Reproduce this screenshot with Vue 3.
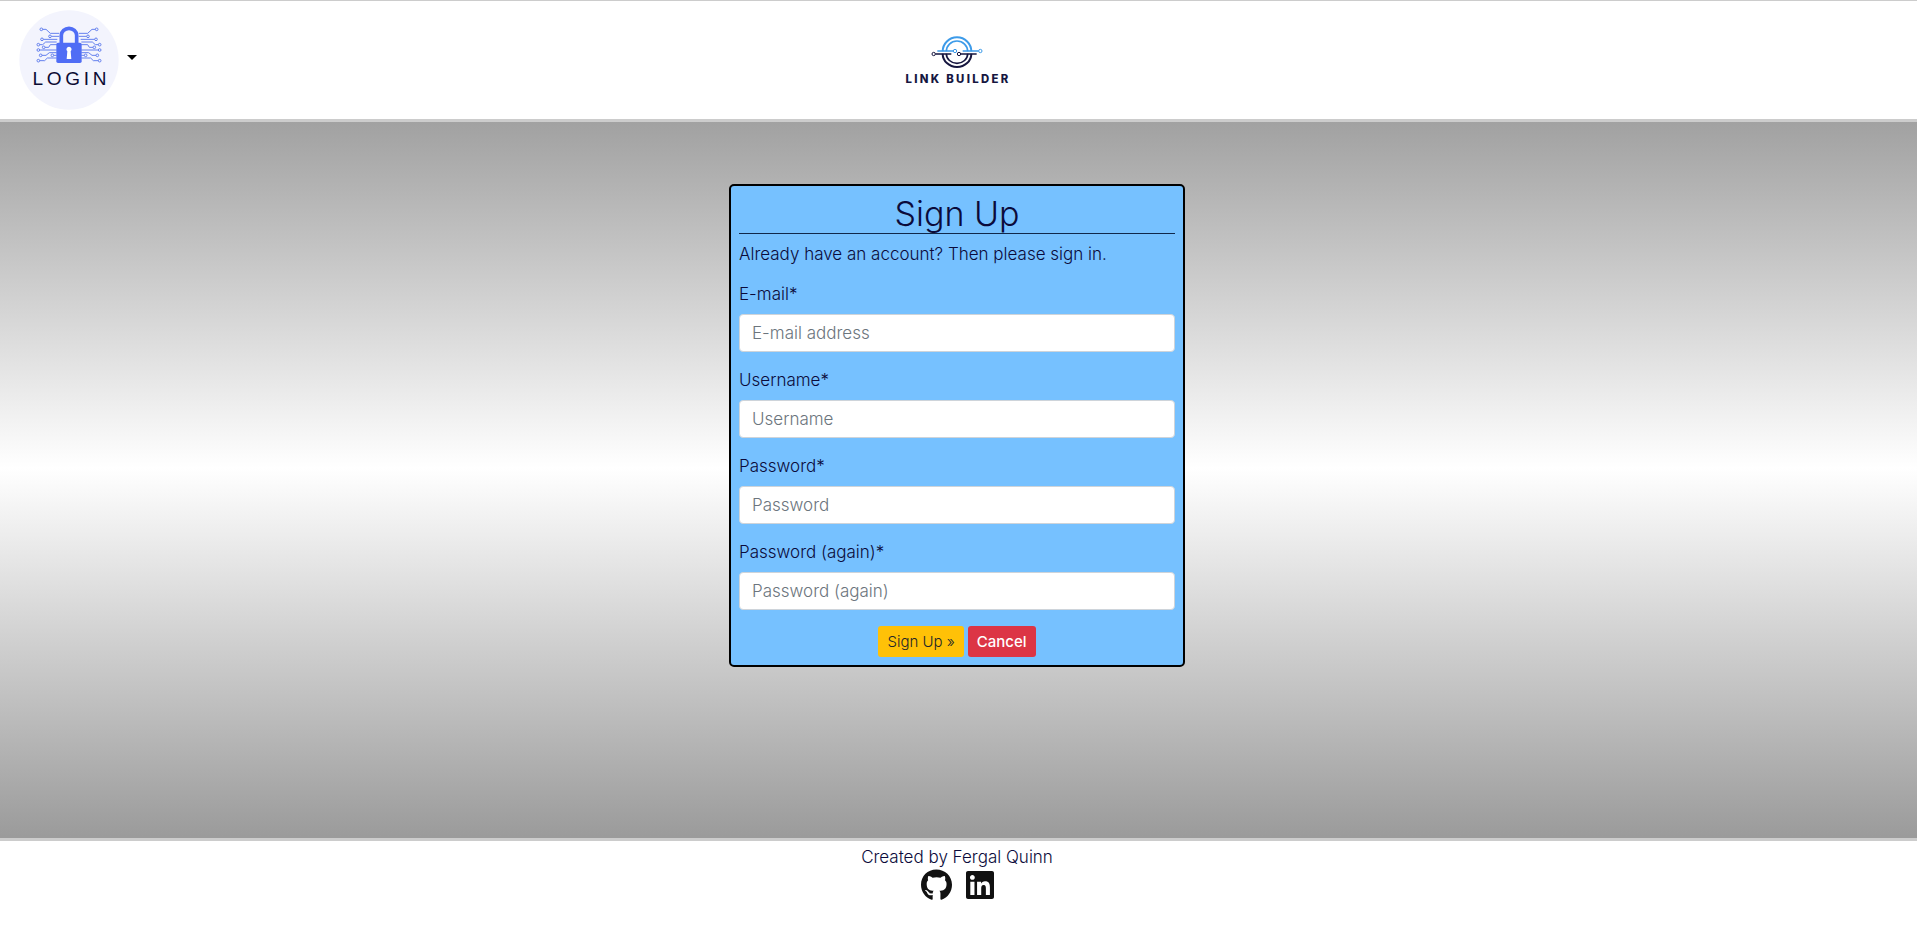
<script setup>
const fields = [
  { id: 'email', label: 'E-mail*', placeholder: 'E-mail address', type: 'email' },
  { id: 'username', label: 'Username*', placeholder: 'Username', type: 'text' },
  { id: 'password1', label: 'Password*', placeholder: 'Password', type: 'password' },
  { id: 'password2', label: 'Password (again)*', placeholder: 'Password (again)', type: 'password' },
]

// Circuit traces on the left of the padlock; the right side mirrors them.
const traces = [
  { d: 'M128 88H138L151 100H178', x: 124, y: 88 },
  { d: 'M154 109H178', x: 150, y: 109 },
  { d: 'M130 118H172', x: 126, y: 118 },
  { d: 'M119 134H128L137 126H170', x: 115, y: 134 },
  { d: 'M135 142H146L151 134H170', x: 131, y: 142 },
  { d: 'M119 150H170', x: 115, y: 150 },
  { d: 'M126 166H138L148 158H170', x: 122, y: 166 },
  { d: 'M161 166H170', x: 157, y: 166 },
  { d: 'M119 182H134L142 174H170', x: 115, y: 182 },
]
</script>

<template>
  <div class="page">
    <header class="header">
      <button class="account" type="button" aria-label="Account menu" aria-haspopup="true">
        <svg class="login-logo" viewBox="57 30 300 300" aria-hidden="true">
          <circle cx="207" cy="180" r="149" fill="#f3f4fd" />
          <g v-for="side in ['left', 'right']" :key="side" :transform="side === 'right' ? 'translate(414 0) scale(-1 1)' : undefined" fill="none" stroke="#6480ee" stroke-width="3">
            <template v-for="t in traces" :key="t.d">
              <path :d="t.d" />
              <circle :cx="t.x" :cy="t.y" r="4" />
            </template>
          </g>
          <path d="M184 130V106A23 21 0 0 1 230 106V130" fill="#f3f4fd" stroke="#506df5" stroke-width="11" />
          <rect x="169" y="128" width="76" height="61" rx="5" fill="#506df5" />
          <path d="M207 140a8 8 0 0 1 5 14l2 23h-14l2-23a8 8 0 0 1 5-14z" fill="#fff" />
          <text class="login-word" x="214" y="255" text-anchor="middle">LOGIN</text>
        </svg>
        <span class="caret"></span>
      </button>
      <a class="brand" href="#" aria-label="Link Builder home">
        <svg class="brand-logo" viewBox="36 36 330 162" aria-hidden="true">
          <g fill="none" stroke-width="5">
            <path d="M158 91A43 42 0 0 1 244 91" stroke="#3d9be9" stroke-width="6" />
            <path d="M169 91A32 31 0 0 1 233 91" stroke="#3d9be9" />
            <path d="M158 98A43 40 0 0 0 244 98" stroke="#16163f" stroke-width="6" />
            <path d="M169 98A32 29 0 0 0 233 98" stroke="#16163f" />
            <path d="M142 90H190M218 90H266" stroke="#3d9be9" />
            <path d="M136 99H184M212 99H260" stroke="#16163f" />
            <circle cx="195" cy="90" r="5" stroke="#3d9be9" fill="#fff" stroke-width="3" />
            <circle cx="271" cy="90" r="5" stroke="#3d9be9" fill="#fff" stroke-width="3" />
            <circle cx="131" cy="99" r="5" stroke="#16163f" fill="#fff" stroke-width="3" />
            <circle cx="207" cy="99" r="5" stroke="#16163f" fill="#fff" stroke-width="3" />
          </g>
          <text class="brand-word" x="204" y="187" text-anchor="middle">LINK BUILDER</text>
        </svg>
      </a>
    </header>

    <main class="main">
      <form class="card" @submit.prevent>
        <h1 class="title">Sign Up</h1>
        <p class="hint">Already have an account? Then please <a href="#">sign in</a>.</p>
        <div v-for="f in fields" :key="f.id" class="field">
          <label :for="f.id">{{ f.label }}</label>
          <input :id="f.id" :type="f.type" :placeholder="f.placeholder" />
        </div>
        <div class="actions">
          <button class="btn submit" type="submit">Sign Up »</button>
          <a class="btn cancel" href="#">Cancel</a>
        </div>
      </form>
    </main>

    <footer class="footer">
      <p class="credit">Created by Fergal Quinn</p>
      <div class="social">
        <a href="#" aria-label="GitHub">
          <svg viewBox="0 0 496 512" width="31" height="32"><path d="M165.900 397.400c0 2-2.300 3.600-5.200 3.600-3.300.3-5.600-1.300-5.600-3.600 0-2 2.300-3.600 5.200-3.600 3-.3 5.600 1.300 5.600 3.600zm-31.100-4.500c-.7 2 1.300 4.300 4.300 4.900 2.600 1 5.600 0 6.200-2s-1.300-4.300-4.300-5.200c-2.600-.7-5.500.3-6.200 2.300zm44.200-1.700c-2.900.7-4.900 2.600-4.600 4.900.3 2 2.900 3.300 5.900 2.600 2.900-.7 4.900-2.600 4.600-4.600-.3-1.900-3-3.200-5.900-2.900zM244.800 8C106.100 8 0 113.300 0 252c0 110.900 69.800 205.800 169.500 239.200 12.800 2.300 17.300-5.600 17.300-12.100 0-6.200-.3-40.400-.3-61.400 0 0-70 15-84.700-29.800 0 0-11.400-29.100-27.800-36.600 0 0-22.900-15.700 1.600-15.400 0 0 24.900 2 38.600 25.800 21.900 38.600 58.600 27.500 72.900 20.900 2.300-16 8.800-27.100 16-33.700-55.900-6.200-112.300-14.300-112.300-110.500 0-27.500 7.600-41.300 23.600-58.900-2.600-6.500-11.100-33.300 2.600-67.900 20.900-6.500 69 27 69 27 20-5.600 41.500-8.500 62.800-8.500s42.800 2.900 62.800 8.500c0 0 48.100-33.600 69-27 13.700 34.700 5.200 61.400 2.600 67.900 16 17.700 25.800 31.500 25.800 58.900 0 96.500-58.900 104.200-114.800 110.500 9.200 7.900 17 22.900 17 46.400 0 33.700-.3 75.400-.3 83.600 0 6.500 4.600 14.400 17.300 12.100C428.200 457.800 496 362.900 496 252 496 113.300 383.500 8 244.800 8z" /></svg>
        </a>
        <a href="#" aria-label="LinkedIn">
          <svg viewBox="0 0 448 512" width="28" height="32"><path d="M416 32H31.900C14.300 32 0 46.500 0 64.300v383.400C0 465.500 14.300 480 31.900 480H416c17.600 0 32-14.500 32-32.300V64.300c0-17.800-14.400-32.300-32-32.300zM135.400 416H69V202.200h66.500V416zm-33.200-243c-21.300 0-38.500-17.300-38.500-38.500S80.900 96 102.200 96c21.200 0 38.500 17.300 38.500 38.500 0 21.300-17.200 38.500-38.500 38.500zm282.100 243h-66.400V312c0-24.800-.5-56.700-34.500-56.700-34.600 0-39.900 27-39.900 54.900V416h-66.400V202.200h63.700v29.200h.9c8.900-16.800 30.600-34.500 62.200-34.500 66.500 0 78.800 43.800 78.800 100.900V416z" /></svg>
        </a>
      </div>
    </footer>
  </div>
</template>

<style>
body {
  margin: 0;
}
</style>

<style scoped>
* {
  box-sizing: border-box;
}
.page {
  display: flex;
  flex-direction: column;
  min-height: 100vh;
  padding-right: 3px;
  font-family: Inter, 'Open Sans', sans-serif;
  font-size: 17px;
  font-weight: 300;
  line-height: 24px;
  color: #0b0b3b;
  background: linear-gradient(gray, white, gray);
}
.header,
.footer {
  margin-right: -3px;
  padding-right: 3px;
}
.header {
  display: grid;
  grid-template-columns: 1fr auto 1fr;
  align-items: center;
  padding: 9px 22px 9px 19px;
  background: #fff;
  border-top: 1px solid #ccc;
  border-bottom: 3px solid #ccc;
}
.account {
  display: flex;
  align-items: center;
  justify-self: start;
  gap: 8px;
  padding: 0;
  border: 0;
  background: none;
}
.login-logo {
  width: 100px;
  height: 100px;
}
.login-word {
  font-size: 57px;
  font-weight: 500;
  letter-spacing: 11px;
  fill: #0b0b33;
}
.caret {
  border: 5px solid transparent;
  border-top-color: #000;
  border-bottom: 0;
  margin-bottom: 5px;
}
.brand {
  display: block;
}
.brand-logo {
  display: block;
  width: 110px;
  height: 54px;
}
.brand-word {
  font-size: 34px;
  font-weight: 800;
  letter-spacing: 7px;
  fill: #16163f;
}
.main {
  flex: 1;
  padding: 62px 16px;
}
.card {
  width: 100%;
  max-width: 456px;
  margin: 0 auto;
  padding: 8px;
  border: 2px solid #000;
  border-radius: 5px;
  background: #76c1ff;
}
.title {
  margin: 0 0 8px;
  border-bottom: 1px solid #10284a;
  font-size: 34px;
  font-weight: 300;
  line-height: 39px;
  text-align: center;
}
.hint {
  margin: 0 0 16px;
}
.hint a {
  color: inherit;
  text-decoration: none;
}
.field {
  margin-bottom: 16px;
}
.field label {
  display: block;
  margin-bottom: 8px;
}
.field input {
  display: block;
  width: 100%;
  height: 38px;
  padding: 6px 12px;
  border: 1px solid #ced4da;
  border-radius: 4px;
  background: #fff;
  font: inherit;
}
.field input::placeholder {
  color: #6c757d;
  opacity: 1;
}
.actions {
  display: flex;
  justify-content: center;
  gap: 4px;
}
.btn {
  padding: 4px 8px;
  border: 1px solid transparent;
  border-radius: 3px;
  font: inherit;
  font-size: 15px;
  line-height: 21px;
  text-decoration: none;
}
.submit {
  background: #ffc107;
  color: #212529;
}
.cancel {
  background: #dc3545;
  color: #fff;
  font-weight: 500;
}
.footer {
  min-height: 98px;
  padding-top: 4px;
  border-top: 3px solid #ccc;
  background: #fff;
  text-align: center;
}
.credit {
  margin: 0;
}
.social {
  display: flex;
  justify-content: center;
  gap: 14px;
}
.social a {
  color: #111;
}
.social svg {
  display: block;
  fill: currentColor;
}
</style>
